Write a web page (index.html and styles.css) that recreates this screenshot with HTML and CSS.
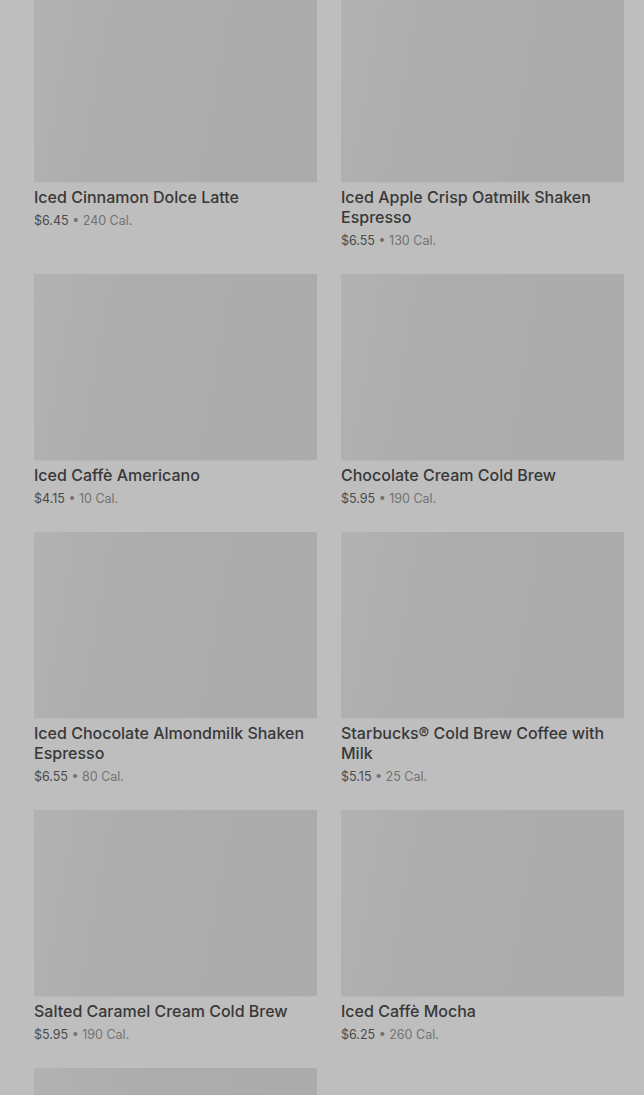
FILE: index.html
```html
<!DOCTYPE html>
<html lang="en">
<head>
    <meta charset="UTF-8">
    <meta name="viewport" content="width=device-width, initial-scale=1.0">
    <title>Cold Coffees</title>
    <link rel="stylesheet" href="styles.css">
</head>
<body>
    <!-- Menu grid (dimmed behind an overlay) -->
    <div class="menu-grid">
        <div class="item">
            <div class="thumb"></div>
            <div class="name">Iced Cinnamon Dolce Latte</div>
            <div class="meta">$6.45 <span class="cal">• 240 Cal.</span></div>
        </div>
        <div class="item">
            <div class="thumb"></div>
            <div class="name">Iced Apple Crisp Oatmilk Shaken Espresso</div>
            <div class="meta">$6.55 <span class="cal">• 130 Cal.</span></div>
        </div>
        <div class="item">
            <div class="thumb"></div>
            <div class="name">Iced Caffè Americano</div>
            <div class="meta">$4.15 <span class="cal">• 10 Cal.</span></div>
        </div>
        <div class="item">
            <div class="thumb"></div>
            <div class="name">Chocolate Cream Cold Brew</div>
            <div class="meta">$5.95 <span class="cal">• 190 Cal.</span></div>
        </div>
        <div class="item">
            <div class="thumb"></div>
            <div class="name">Iced Chocolate Almondmilk Shaken Espresso</div>
            <div class="meta">$6.55 <span class="cal">• 80 Cal.</span></div>
        </div>
        <div class="item">
            <div class="thumb"></div>
            <div class="name">Starbucks® Cold Brew Coffee with Milk</div>
            <div class="meta">$5.15 <span class="cal">• 25 Cal.</span></div>
        </div>
        <div class="item">
            <div class="thumb"></div>
            <div class="name">Salted Caramel Cream Cold Brew</div>
            <div class="meta">$5.95 <span class="cal">• 190 Cal.</span></div>
        </div>
        <div class="item">
            <div class="thumb"></div>
            <div class="name">Iced Caffè Mocha</div>
            <div class="meta">$6.25 <span class="cal">• 260 Cal.</span></div>
        </div>
        <!-- next card, only its picture shows above the fold -->
        <div class="item">
            <div class="thumb"></div>
        </div>
    </div>
</body>
</html>
```

FILE: styles.css
```css
body {
    font-family: Inter, "Noto Sans", sans-serif;
    background-color: #bebebe;
    margin: 0;
    padding: 0;
    overflow: hidden;
}
.menu-grid {
    display: grid;
    grid-template-columns: 283px 283px;
    column-gap: 24px;
    row-gap: 23px;
    padding: 0 20px 0 34px;
    margin-top: -4px;
}
.thumb {
    height: 186px;
    background: linear-gradient(100deg, #b2b2b2 0%, #adadad 30%, #ababab 100%);
    border-bottom: 1px solid #b8b8b8;
}
.name {
    margin-top: 4px;
    font-size: 16px;
    font-weight: 500;
    line-height: 20px;
    color: #383838;
}
.meta {
    margin-top: 4px;
    font-size: 12.5px;
    line-height: 20px;
    color: #4a4a4a;
}
.cal {
    color: #727272;
}
```
